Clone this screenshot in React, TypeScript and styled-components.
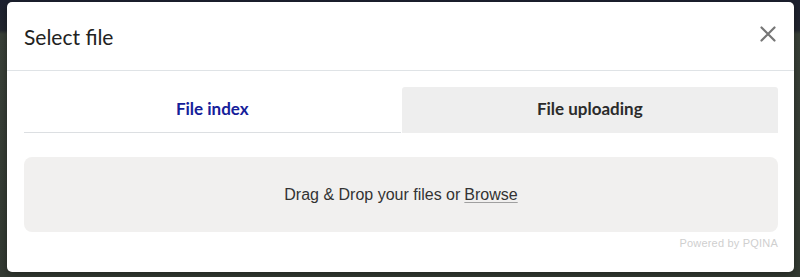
import React, { useState } from "react";
import styled, { createGlobalStyle } from "styled-components";

const GlobalStyle = createGlobalStyle`
  html, body {
    margin: 0;
    padding: 0;
    width: 800px;
    height: 277px;
    overflow: hidden;
    background: linear-gradient(180deg, #1d2130 0px, #23272f 30px, #3a4139 34px, #343b33 277px);
  }
`;

type TabKey = "index" | "upload";

function App() {
  const [tab, setTab] = useState<TabKey>("index");

  return (
    <>
      <GlobalStyle />
      <Modal>
        <Header>
          <Title>Select file</Title>
          <CloseButton aria-label="Close">
            <svg width="16" height="16" viewBox="0 0 16 16">
              <path
                d="M1.5 1.5 L14.5 14.5 M14.5 1.5 L1.5 14.5"
                stroke="#767676"
                strokeWidth="2.2"
                strokeLinecap="round"
              />
            </svg>
          </CloseButton>
        </Header>
        <Body>
          <Tabs>
            <Tab $active={tab === "index"} onClick={() => setTab("index")}>
              File index
            </Tab>
            <Tab $active={tab === "upload"} onClick={() => setTab("upload")}>
              File uploading
            </Tab>
          </Tabs>
          <DropZone>
            Drag &amp; Drop your files or <Browse>Browse</Browse>
          </DropZone>
          <Credit>Powered by PQINA</Credit>
        </Body>
      </Modal>
    </>
  );
}

const Modal = styled.div`
  box-sizing: border-box;
  width: 787px;
  height: 270px;
  margin: 2px 0 0 7px;
  background: #ffffff;
  border-radius: 5px;
  box-shadow: 0 2px 8px rgba(0, 0, 0, 0.4);
  overflow: hidden;
`;

const Header = styled.div`
  box-sizing: border-box;
  height: 69px;
  padding: 0 18px 0 17px;
  display: flex;
  align-items: center;
  justify-content: space-between;
  border-bottom: 1px solid #dfe3e6;
`;

const Title = styled.h2`
  margin: 0;
  font-family: Lato, "Open Sans", sans-serif;
  font-weight: 400;
  font-size: 21px;
  color: #222222;
`;

const CloseButton = styled.button`
  border: 0;
  background: transparent;
  padding: 0;
  margin-top: -5px;
  display: flex;
  cursor: pointer;
`;

const Body = styled.div`
  padding: 16px 16px 0 17px;
`;

const Tabs = styled.div`
  display: grid;
  grid-template-columns: 1fr 1fr;
  gap: 1px;
`;

const Tab = styled.button<{ $active: boolean }>`
  height: 46px;
  border: 0;
  border-bottom: 1px solid ${(p) => (p.$active ? "#dcdfe2" : "transparent")};
  border-radius: 3px 3px 0 0;
  background: ${(p) => (p.$active ? "#ffffff" : "#eeeeee")};
  color: ${(p) => (p.$active ? "#15209a" : "#2b2b2b")};
  font-family: Lato, "Open Sans", sans-serif;
  font-weight: 700;
  font-size: 17px;
  cursor: pointer;
  padding: 0 0 2px;
`;

const DropZone = styled.div`
  margin-top: 24px;
  height: 75px;
  border-radius: 8px;
  background: #f1f0ef;
  display: flex;
  align-items: center;
  justify-content: center;
  font-family: "Liberation Sans", Arial, sans-serif;
  font-size: 16px;
  color: #333333;
`;

const Browse = styled.span`
  margin-left: 4px;
  text-decoration: underline;
  text-decoration-color: #a0a0a0;
  text-underline-offset: 2px;
  cursor: pointer;
`;

const Credit = styled.div`
  margin-top: 5px;
  text-align: right;
  font-family: "Liberation Sans", Arial, sans-serif;
  font-size: 11px;
  color: #cfcfcf;
  letter-spacing: 0.2px;
`;

export default App;
